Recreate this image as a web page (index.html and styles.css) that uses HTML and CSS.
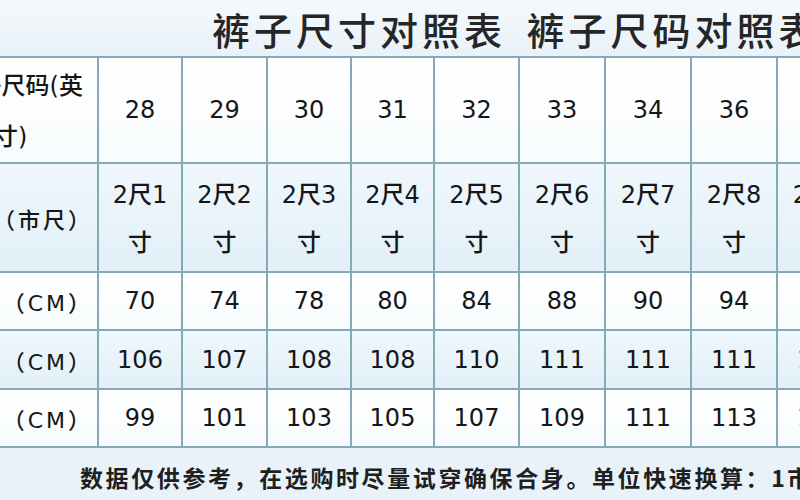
FILE: index.html
```html
<!DOCTYPE html>
<html lang="zh-CN">
<head>
<meta charset="utf-8">
<title>裤子尺寸对照表</title>
<link rel="stylesheet" href="styles.css">
</head>
<body>
<div class="page">
  <header class="title">裤子尺寸对照表 裤子尺码对照表</header>
  <div class="table">
    <div class="row r-inch">
      <div class="cell head head-two"><span class="l1">裤子尺码(英</span><span class="l2">寸)</span></div>
      <div class="cell">28</div>
      <div class="cell">29</div>
      <div class="cell">30</div>
      <div class="cell">31</div>
      <div class="cell">32</div>
      <div class="cell">33</div>
      <div class="cell">34</div>
      <div class="cell">36</div>
      <div class="cell">38</div>
    </div>
    <div class="row r-chi alt">
      <div class="cell head"><span class="hx">裤长（市尺）</span></div>
      <div class="cell two">2尺1<br>寸</div>
      <div class="cell two">2尺2<br>寸</div>
      <div class="cell two">2尺3<br>寸</div>
      <div class="cell two">2尺4<br>寸</div>
      <div class="cell two">2尺5<br>寸</div>
      <div class="cell two">2尺6<br>寸</div>
      <div class="cell two">2尺7<br>寸</div>
      <div class="cell two">2尺8<br>寸</div>
      <div class="cell two">2尺9<br>寸</div>
    </div>
    <div class="row r-s">
      <div class="cell head"><span class="hx">腰围（CM）</span></div>
      <div class="cell">70</div>
      <div class="cell">74</div>
      <div class="cell">78</div>
      <div class="cell">80</div>
      <div class="cell">84</div>
      <div class="cell">88</div>
      <div class="cell">90</div>
      <div class="cell">94</div>
      <div class="cell">98</div>
    </div>
    <div class="row r-m alt">
      <div class="cell head"><span class="hx">臀围（CM）</span></div>
      <div class="cell">106</div>
      <div class="cell">107</div>
      <div class="cell">108</div>
      <div class="cell">108</div>
      <div class="cell">110</div>
      <div class="cell">111</div>
      <div class="cell">111</div>
      <div class="cell">111</div>
      <div class="cell">112</div>
    </div>
    <div class="row r-s">
      <div class="cell head"><span class="hx">裤长（CM）</span></div>
      <div class="cell">99</div>
      <div class="cell">101</div>
      <div class="cell">103</div>
      <div class="cell">105</div>
      <div class="cell">107</div>
      <div class="cell">109</div>
      <div class="cell">111</div>
      <div class="cell">113</div>
      <div class="cell">115</div>
    </div>
  </div>
  <footer class="note">数据仅供参考，在选购时尽量试穿确保合身。单位快速换算：1市尺=10寸≈33.3厘米</footer>
</div>
</body>
</html>
```
FILE: styles.css
```css
html, body {
  margin: 0;
  padding: 0;
}
body {
  width: 800px;
  height: 500px;
  overflow: hidden;
  background: #e8f2f8;
  font-family: "DejaVu Sans", "Noto Sans CJK SC", sans-serif;
  color: #161616;
}
.page {
  width: 800px;
  height: 500px;
  overflow: hidden;
  display: flex;
  flex-direction: column;
}
.title {
  height: 56px;
  flex: none;
  box-sizing: border-box;
  padding-left: 212px;
  line-height: 58px;
  font-family: "Noto Sans CJK SC", sans-serif;
  font-size: 38px;
  font-weight: 500;
  letter-spacing: 4px;
  word-spacing: 8px;
  color: #262626;
  white-space: nowrap;
  background: linear-gradient(#f4f9fc, #e9f2f8);
}
.table {
  flex: none;
  border-top: 2px solid #86a9b6;
}
.row {
  display: grid;
  grid-template-columns: 99px 84px 85px 84px 83px 85px 86px 86px 86px 86px;
  border-bottom: 2px solid #86a9b6;
  box-sizing: border-box;
  background: linear-gradient(#ffffff, #f7fbfd);
}
.row.alt {
  background: linear-gradient(#eef7fc, #e3f0f8);
}
.r-inch { height: 106px; }
.r-chi { height: 109px; }
.r-s { height: 58px; }
.r-m { height: 59px; }
.cell {
  border-right: 2px solid #86a9b6;
  display: flex;
  align-items: center;
  justify-content: center;
  text-align: center;
  font-size: 24px;
  font-weight: 500;
  white-space: nowrap;
  overflow: hidden;
  min-width: 0;
}
.cell.two {
  line-height: 48px;
  padding-top: 2px;
}
.head {
  justify-content: flex-end;
  padding-right: 4px;
  font-size: 22px;
  letter-spacing: 3px;
}
.head-two {
  flex-direction: column;
  align-items: flex-end;
  justify-content: center;
  padding-right: 14px;
  font-size: 24px;
  letter-spacing: 0;
  line-height: 51px;
  padding-top: 3px;
}
.head-two .l1 {
  align-self: flex-end;
}
.head-two .l2 {
  align-self: flex-start;
  margin-left: -6px;
}
.note {
  flex: none;
  height: 52px;
  box-sizing: border-box;
  padding: 3px 0 0 80px;
  line-height: 52px;
  font-family: "Noto Sans CJK SC", sans-serif;
  font-size: 23px;
  font-weight: 700;
  letter-spacing: 2.6px;
  color: #1f1f1f;
  white-space: nowrap;
  background: #e8f2f8;
}
```
